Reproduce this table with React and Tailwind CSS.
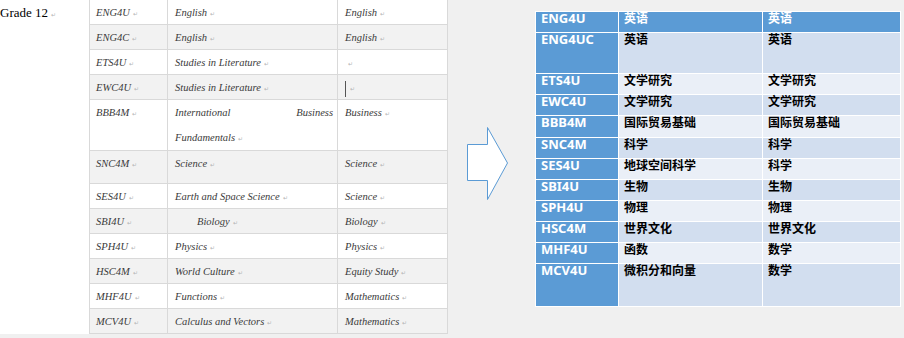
const leftRows = [
  { code: 'ENG4U', name: 'English', cat: 'English', h: 'h-[25px]', bg: 'bg-white' },
  { code: 'ENG4C', name: 'English', cat: 'English', h: 'h-[25px]', bg: 'bg-[#f2f2f2]' },
  { code: 'ETS4U', name: 'Studies in Literature', cat: '', h: 'h-[25px]', bg: 'bg-white' },
  { code: 'EWC4U', name: 'Studies in Literature', cat: '', cursor: true, h: 'h-[25px]', bg: 'bg-[#f2f2f2]' },
  { code: 'BBB4M', name: 'International Business Fundamentals', cat: 'Business', h: 'h-[51px]', bg: 'bg-white' },
  { code: 'SNC4M', name: 'Science', cat: 'Science', h: 'h-[33px]', bg: 'bg-[#f2f2f2]' },
  { code: 'SES4U', name: 'Earth and Space Science', cat: 'Science', h: 'h-[25px]', bg: 'bg-white' },
  { code: 'SBI4U', name: 'Biology', cat: 'Biology', indent: true, h: 'h-[25px]', bg: 'bg-[#f2f2f2]' },
  { code: 'SPH4U', name: 'Physics', cat: 'Physics', h: 'h-[25px]', bg: 'bg-white' },
  { code: 'HSC4M', name: 'World Culture', cat: 'Equity Study', h: 'h-[25px]', bg: 'bg-[#f2f2f2]' },
  { code: 'MHF4U', name: 'Functions', cat: 'Mathematics', h: 'h-[25px]', bg: 'bg-white' },
  { code: 'MCV4U', name: 'Calculus and Vectors', cat: 'Mathematics', h: 'h-[25px]', bg: 'bg-[#f2f2f2]' },
];

const rightRows = [
  { code: 'ENG4UC', name: '英语', cat: '英语', h: 'h-[40px]', bg: 'bg-[#d2deef]' },
  { code: 'ETS4U', name: '文学研究', cat: '文学研究', h: 'h-[20px]', bg: 'bg-[#eaeff7]' },
  { code: 'EWC4U', name: '文学研究', cat: '文学研究', h: 'h-[20px]', bg: 'bg-[#d2deef]' },
  { code: 'BBB4M', name: '国际贸易基础', cat: '国际贸易基础', h: 'h-[21px]', bg: 'bg-[#eaeff7]' },
  { code: 'SNC4M', name: '科学', cat: '科学', h: 'h-[20px]', bg: 'bg-[#d2deef]' },
  { code: 'SES4U', name: '地球空间科学', cat: '科学', h: 'h-[20px]', bg: 'bg-[#eaeff7]' },
  { code: 'SBI4U', name: '生物', cat: '生物', h: 'h-[20px]', bg: 'bg-[#d2deef]' },
  { code: 'SPH4U', name: '物理', cat: '物理', h: 'h-[20px]', bg: 'bg-[#eaeff7]' },
  { code: 'HSC4M', name: '世界文化', cat: '世界文化', h: 'h-[20px]', bg: 'bg-[#d2deef]' },
  { code: 'MHF4U', name: '函数', cat: '数学', h: 'h-[20px]', bg: 'bg-[#eaeff7]' },
  { code: 'MCV4U', name: '微积分和向量', cat: '数学', h: 'h-[42px]', bg: 'bg-[#d2deef]' },
];

function Mark() {
  return <span className="ml-[3px] text-[6px] text-[#b5b5b5] align-baseline not-italic">↵</span>;
}

export default function App() {
  return (
    <div className="w-[904px] h-[338px] bg-[#f0f0f0] flex items-start overflow-hidden">
      {/* document page */}
      <div className="w-[448px] h-[334px] bg-white flex font-['Liberation_Serif',serif]">
        <div className="w-[89px] text-[13px] leading-[25px] text-black">
          Grade 12<Mark />
        </div>
        <div className="w-[359px] border-l border-[#d9d9d9] italic text-[10.5px] leading-[25px] text-[#3a3a3a]">
          {leftRows.map((r) => (
            <div key={r.code} className={`flex border-b border-[#d9d9d9] ${r.h} ${r.bg}`}>
              <div className="w-[78px] pl-[6px] border-r border-[#d9d9d9]">
                {r.code}<Mark />
              </div>
              <div className={`w-[170px] pr-[4px] border-r border-[#d9d9d9] text-justify ${r.indent ? 'pl-[29px]' : 'pl-[7px]'}`}>
                {r.name}<Mark />
              </div>
              <div className="w-[110px] pl-[7px] border-r border-[#d9d9d9] flex items-start">
                {r.cursor && <span className="mt-[6px] mr-[1px] w-px h-[16px] bg-[#555]" />}
                <span>{r.cat}<Mark /></span>
              </div>
            </div>
          ))}
        </div>
      </div>

      {/* arrow */}
      <div className="w-[87px] pl-[18px] pt-[126px]">
        <svg width="43" height="75" viewBox="0 0 43 75">
          <path d="M1.5 18.5 H21.5 V1.5 L41.5 37 L21.5 73.5 V54.5 H1.5 Z" fill="#ffffff" stroke="#5b9bd5" strokeWidth="1" />
        </svg>
      </div>

      {/* translated table */}
      <div className="mt-[11px] bg-white p-px flex flex-col gap-px font-['Noto_Sans','Noto_Sans_CJK_SC',sans-serif] font-bold">
        <div className="flex gap-px h-[20px] bg-white">
          <div className="w-[82px] bg-[#5b9bd5] pl-[5px] text-white text-[13px] leading-[12px]">ENG4U</div>
          <div className="w-[143px] bg-[#5b9bd5] pl-[5px] text-white text-[12px] leading-[14px]">英语</div>
          <div className="w-[137px] bg-[#5b9bd5] pl-[5px] text-white text-[12px] leading-[14px]">英语</div>
        </div>
        {rightRows.map((r) => (
          <div key={r.code} className={`flex gap-px ${r.h}`}>
            <div className="w-[82px] bg-[#5b9bd5] pl-[5px] text-white text-[13px] leading-[12px]">{r.code}</div>
            <div className={`w-[143px] ${r.bg} pl-[5px] text-black text-[12px] leading-[14px]`}>{r.name}</div>
            <div className={`w-[137px] ${r.bg} pl-[5px] text-black text-[12px] leading-[14px]`}>{r.cat}</div>
          </div>
        ))}
      </div>
    </div>
  );
}
